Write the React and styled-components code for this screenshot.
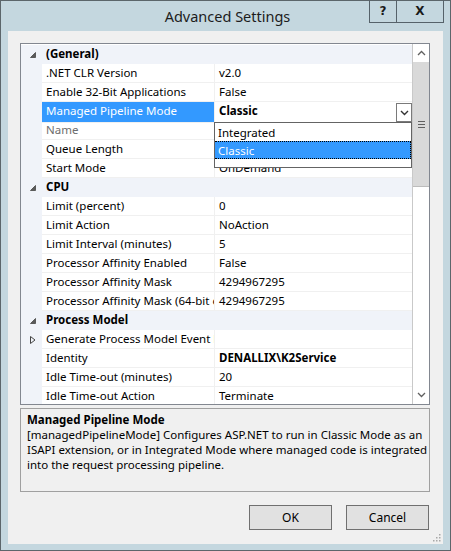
import React from "react";
import styled, { createGlobalStyle } from "styled-components";

const GlobalStyle = createGlobalStyle`
  html, body {
    margin: 0;
    padding: 0;
    background: #ffffff;
  }
  body {
    font-family: "Noto Sans", "Liberation Sans", sans-serif;
    font-size: 11.5px;
    color: #000;
  }
`;

const sections = [
  {
    title: "(General)",
    rows: [
      { name: ".NET CLR Version", value: "v2.0" },
      { name: "Enable 32-Bit Applications", value: "False" },
      { name: "Managed Pipeline Mode", value: "Classic", bold: true, selected: true },
      { name: "Name", value: "DefaultAppPool", disabled: true },
      { name: "Queue Length", value: "1000" },
      { name: "Start Mode", value: "OnDemand" },
    ],
  },
  {
    title: "CPU",
    rows: [
      { name: "Limit (percent)", value: "0" },
      { name: "Limit Action", value: "NoAction" },
      { name: "Limit Interval (minutes)", value: "5" },
      { name: "Processor Affinity Enabled", value: "False" },
      { name: "Processor Affinity Mask", value: "4294967295" },
      { name: "Processor Affinity Mask (64-bit option)", value: "4294967295" },
    ],
  },
  {
    title: "Process Model",
    rows: [
      { name: "Generate Process Model Event Log Entry", value: "", collapsed: true },
      { name: "Identity", value: "DENALLIX\\K2Service", bold: true },
      { name: "Idle Time-out (minutes)", value: "20" },
      { name: "Idle Time-out Action", value: "Terminate" },
    ],
  },
];

const Window = styled.div`
  width: 451px;
  height: 551px;
  box-sizing: border-box;
  border: 1px solid #5c666b;
  background: #c4d7df;
  padding: 0 7px 6px;
  display: flex;
  flex-direction: column;
`;

const TitleBar = styled.div`
  position: relative;
  height: 30px;
  flex: none;
  display: flex;
  align-items: center;
  justify-content: center;
`;

const Title = styled.div`
  font-size: 14.5px;
  color: #1c1c1c;
  padding-left: 4px;
`;

const Caption = styled.div`
  position: absolute;
  top: -1px;
  right: -1px;
  display: flex;
  height: 22px;
  border: 1px solid #56626a;
  border-top: none;
`;

const CaptionButton = styled.div`
  width: ${(p) => p.$w}px;
  display: flex;
  align-items: center;
  justify-content: center;
  font-family: "DejaVu Sans", sans-serif;
  font-weight: bold;
  font-size: 12px;
  color: #1a1a1a;
  border-left: ${(p) => (p.$divider ? "1px solid #56626a" : "none")};
`;

const Client = styled.div`
  position: relative;
  flex: 1;
  background: #f0f0f0;
  padding: 12px 13px 0 12px;
  display: flex;
  flex-direction: column;
`;

const Grid = styled.div`
  height: 362px;
  box-sizing: border-box;
  border: 1px solid #828790;
  background: #ffffff;
  display: flex;
  overflow: hidden;
`;

const RowList = styled.div`
  flex: 1;
  padding-top: 1px;
  background: #ffffff;
`;

const Row = styled.div`
  display: grid;
  grid-template-columns: 21px 173px 1fr;
  height: 19px;
  background: ${(p) => (p.$category ? "#f0f3f9" : "#ffffff")};
`;

const Gutter = styled.div`
  background: #f0f3f9;
  display: flex;
  align-items: center;
  justify-content: center;
  padding-left: 2px;
`;

const NameCell = styled.div`
  box-sizing: border-box;
  padding-left: 4px;
  line-height: 18px;
  white-space: nowrap;
  overflow: hidden;
  border-bottom: 1px solid ${(p) => (p.$category ? "transparent" : "#f0f0f0")};
  border-right: 1px solid ${(p) => (p.$category ? "transparent" : "#f0f0f0")};
  background: ${(p) => (p.$selected ? "#3399ff" : "transparent")};
  color: ${(p) => (p.$selected ? "#ffffff" : p.$disabled ? "#6d6d6d" : "#000000")};
  font-weight: ${(p) => (p.$category ? "bold" : "normal")};
`;

const ValueCell = styled.div`
  position: relative;
  box-sizing: border-box;
  padding-left: 4px;
  line-height: 18px;
  white-space: nowrap;
  border-bottom: 1px solid ${(p) => (p.$category ? "transparent" : "#f0f0f0")};
  font-weight: ${(p) => (p.$bold ? "bold" : "normal")};
  display: flex;
  justify-content: space-between;
`;

const DropButton = styled.div`
  width: 14px;
  height: 17px;
  margin-top: 1px;
  border: 1px solid #7a7a7a;
  background: #ffffff;
  display: flex;
  align-items: center;
  justify-content: center;
`;

const DropList = styled.div`
  position: absolute;
  top: 20px;
  left: -1px;
  right: 0;
  height: 44px;
  background: #ffffff;
  border: 1px solid #646464;
  font-weight: normal;
  z-index: 2;
`;

const DropItem = styled.div`
  height: 18px;
  line-height: 17px;
  padding-left: 3px;
  box-sizing: border-box;
  border: 1px dotted ${(p) => (p.$active ? "#000000" : "transparent")};
  border-left: none;
  background: ${(p) => (p.$active ? "#3399ff" : "transparent")};
  color: ${(p) => (p.$active ? "#ffffff" : "#000000")};
`;

const ScrollBar = styled.div`
  width: 16px;
  flex: none;
  border-left: 1px solid #c9c9c9;
  background: #ffffff;
  display: flex;
  flex-direction: column;
`;

const ScrollArrow = styled.div`
  height: 18px;
  display: flex;
  align-items: center;
  justify-content: center;
  flex: none;
`;

const Thumb = styled.div`
  height: 125px;
  box-sizing: border-box;
  background: #d9d9d9;
  border-bottom: 1px solid #bcbcbc;
  display: flex;
  align-items: center;
  justify-content: center;
`;

const Track = styled.div`
  flex: 1;
`;

const Description = styled.div`
  margin-top: 3px;
  height: 84px;
  box-sizing: border-box;
  border: 1px solid #a0a0a0;
  padding: 3px 6px;
  line-height: 15px;
  white-space: nowrap;
  overflow: hidden;
`;

const DescTitle = styled.div`
  font-weight: bold;
`;

const ButtonRow = styled.div`
  margin-top: 13px;
  display: flex;
  justify-content: flex-end;
  gap: 14px;
  padding-right: 1px;
`;

const Button = styled.button`
  width: 83px;
  height: 25px;
  border: 1px solid #707070;
  background: #e1e1e1;
  font-family: inherit;
  font-size: 12px;
  color: #000;
  padding: 0;
`;

const Grip = styled.svg`
  position: absolute;
  right: 2px;
  bottom: 2px;
`;

function ExpandedGlyph() {
  return (
    <svg width="8" height="8" viewBox="0 0 8 8">
      <polygon points="6.5,1.5 6.5,6.5 1.5,6.5" fill="#5a5a5a" stroke="#5a5a5a" strokeWidth="1" />
    </svg>
  );
}

function CollapsedGlyph() {
  return (
    <svg width="8" height="10" viewBox="0 0 8 10">
      <polygon points="1.5,1.5 6,5 1.5,8.5" fill="none" stroke="#444" strokeWidth="1" />
    </svg>
  );
}

function Chevron({ up }) {
  return (
    <svg width="9" height="6" viewBox="0 0 9 6">
      <polyline
        points={up ? "1,5 4.5,1.5 8,5" : "1,1 4.5,4.5 8,1"}
        fill="none"
        stroke="#606060"
        strokeWidth="1.3"
      />
    </svg>
  );
}

function PropertyRow({ row }) {
  return (
    <Row>
      <Gutter>{row.collapsed && <CollapsedGlyph />}</Gutter>
      <NameCell $selected={row.selected} $disabled={row.disabled}>
        {row.name}
      </NameCell>
      <ValueCell $bold={row.bold}>
        <span>{row.value}</span>
        {row.selected && (
          <>
            <DropButton>
              <svg width="9" height="6" viewBox="0 0 9 6">
                <polyline points="1,1 4.5,4.5 8,1" fill="none" stroke="#333" strokeWidth="1.4" />
              </svg>
            </DropButton>
            <DropList>
              <DropItem>Integrated</DropItem>
              <DropItem $active>Classic</DropItem>
            </DropList>
          </>
        )}
      </ValueCell>
    </Row>
  );
}

export default function App() {
  return (
    <>
      <GlobalStyle />
      <Window>
        <TitleBar>
          <Title>Advanced Settings</Title>
          <Caption>
            <CaptionButton $w={26}>?</CaptionButton>
            <CaptionButton $w={46} $divider>
              X
            </CaptionButton>
          </Caption>
        </TitleBar>
        <Client>
          <Grid>
            <RowList>
              {sections.map((s) => (
                <React.Fragment key={s.title}>
                  <Row $category>
                    <Gutter>
                      <ExpandedGlyph />
                    </Gutter>
                    <NameCell $category>{s.title}</NameCell>
                    <ValueCell $category />
                  </Row>
                  {s.rows.map((r) => (
                    <PropertyRow key={r.name} row={r} />
                  ))}
                </React.Fragment>
              ))}
            </RowList>
            <ScrollBar>
              <ScrollArrow>
                <Chevron up />
              </ScrollArrow>
              <Thumb>
                <svg width="7" height="7" viewBox="0 0 7 7">
                  <rect x="0" y="0" width="7" height="1" fill="#606060" />
                  <rect x="0" y="3" width="7" height="1" fill="#606060" />
                  <rect x="0" y="6" width="7" height="1" fill="#606060" />
                </svg>
              </Thumb>
              <Track />
              <ScrollArrow>
                <Chevron />
              </ScrollArrow>
            </ScrollBar>
          </Grid>
          <Description>
            <DescTitle>Managed Pipeline Mode</DescTitle>
            [managedPipelineMode] Configures ASP.NET to run in Classic Mode as an
            <br />
            ISAPI extension, or in Integrated Mode where managed code is integrated
            <br />
            into the request processing pipeline.
          </Description>
          <ButtonRow>
            <Button>OK</Button>
            <Button>Cancel</Button>
          </ButtonRow>
          <Grip width="9" height="9" viewBox="0 0 9 9">
            {[
              [7, 1],
              [7, 4],
              [4, 4],
              [7, 7],
              [4, 7],
              [1, 7],
            ].map(([x, y]) => (
              <rect key={`${x}-${y}`} x={x} y={y} width="1.5" height="1.5" fill="#a8a8a8" />
            ))}
          </Grip>
        </Client>
      </Window>
    </>
  );
}
